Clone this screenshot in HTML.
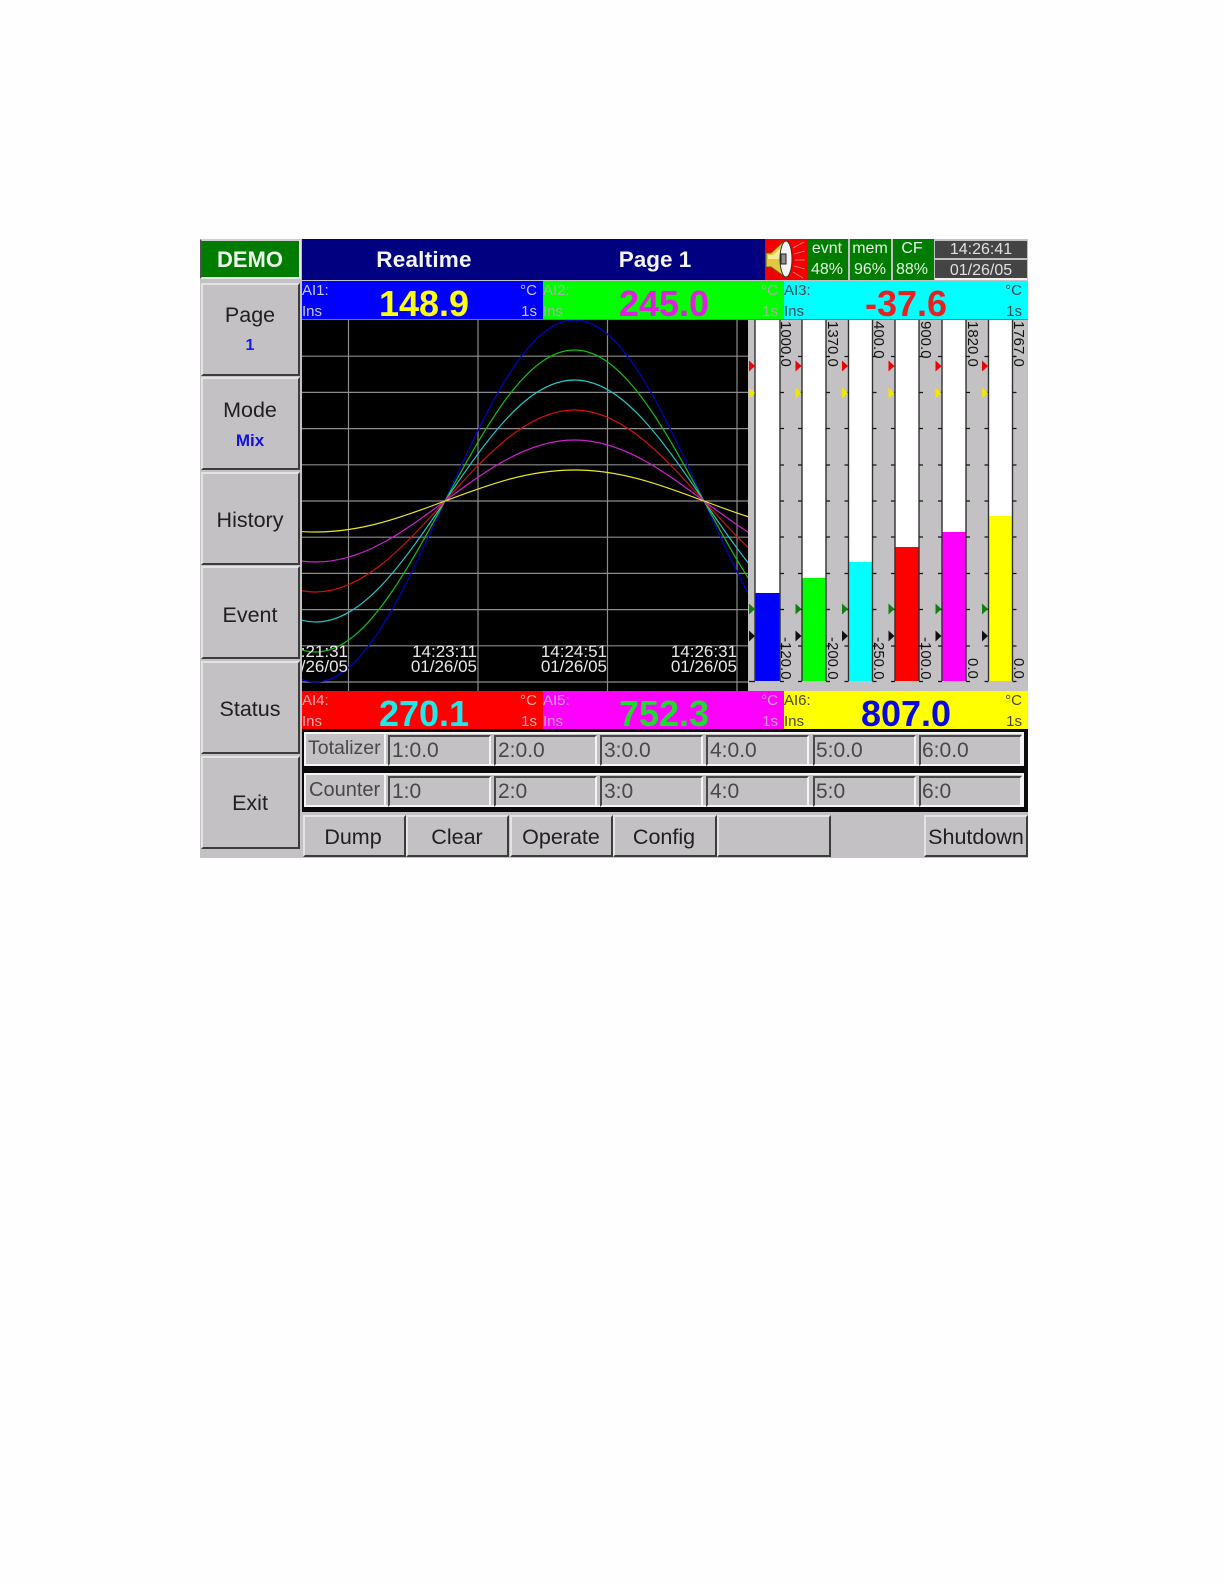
<!DOCTYPE html>
<html><head><meta charset="utf-8"><title>Realtime</title>
<style>
html,body{margin:0;padding:0;background:#fefefe}
body{width:1224px;height:1584px;position:relative;overflow:hidden;font-family:"Liberation Sans",sans-serif}
div{position:absolute;box-sizing:border-box}
.t{white-space:nowrap;text-align:center;line-height:30px;height:30px;margin-top:-15px;transform:translateX(-50%)}
.l{white-space:nowrap;line-height:20px;height:20px;margin-top:-10px;font-size:15px}
.r{white-space:nowrap;line-height:20px;height:20px;margin-top:-10px;font-size:15px;transform:translateX(-100%)}
.v{white-space:nowrap;font-weight:bold;font-size:36px;line-height:40px;height:40px;margin-top:-20px;transform:translateX(-50%)}
.b{background:#c3c1c3;border:2px solid;border-color:#e4e2e4 #3c3c3c #3c3c3c #e4e2e4}
.s{background:#c3c1c3;border:2px solid;border-color:#484848 #f4f4f4 #f4f4f4 #484848}
.f{font-size:21px;color:#484848;white-space:nowrap;line-height:30px;height:30px;margin-top:-15px}
.h{font-size:21.5px;color:#202020}
.w{color:#e6f0e6;font-size:16px;line-height:20px;height:20px;margin-top:-10px;white-space:nowrap;transform:translateX(-50%)}
.d{color:#e8e8e8;font-size:17px;line-height:18px;height:18px;margin-top:-9px;white-space:nowrap;transform:translateX(-100%)}
.y{writing-mode:vertical-rl;font-size:15px;line-height:16px;width:16px;color:#111;white-space:nowrap}
</style></head><body>
<div style="left:200px;top:239px;width:828px;height:619px;background:#c3c1c3"></div>

<!-- header -->
<div style="left:200px;top:239px;width:101px;height:40px;background:#007c00;border:2px solid;border-color:#d0d0d0 #e8e8e8 #e8e8e8 #505050"></div>
<div class="t" style="left:250px;top:260px;font-size:22px;font-weight:bold;color:#eef6ee">DEMO</div>
<div style="left:302px;top:239px;width:463px;height:41px;background:#000080"></div>
<div class="t" style="left:424px;top:260px;font-size:22.5px;font-weight:bold;color:#f4f4f4;letter-spacing:.2px">Realtime</div>
<div class="t" style="left:655px;top:260px;font-size:22.5px;font-weight:bold;color:#f4f4f4">Page 1</div>

<svg style="position:absolute;left:765px;top:239px" width="42" height="41" viewBox="0 0 42 41">
<rect width="42" height="41" fill="#f40000"/>
<path d="M1 14H6L19 2L20 38L6 28H1Z" fill="#e0c840" stroke="#6a5a10" stroke-width="1"/>
<path d="M3 16H8L17 8V20H3Z" fill="#f4ec90"/>
<ellipse cx="21" cy="20" rx="6" ry="18" fill="#f4f4f4" stroke="#303030" stroke-width="1"/>
<rect x="16" y="15" width="5" height="10" fill="#909090" stroke="#202020"/>
<path d="M28 9L39 3M29 15L40 12M30 21L40 21M29 27L40 30M28 33L38 39" stroke="#f07070" stroke-width="1" fill="none"/>
</svg>

<div style="left:807px;top:239px;width:41px;height:41px;background:#007c00"></div>
<div style="left:850px;top:239px;width:41px;height:41px;background:#007c00"></div>
<div style="left:893px;top:239px;width:41px;height:41px;background:#007c00"></div>
<div class="w" style="left:827px;top:249px">evnt</div>
<div class="w" style="left:827px;top:270px">48%</div>
<div class="w" style="left:870px;top:249px">mem</div>
<div class="w" style="left:870px;top:270px">96%</div>
<div class="w" style="left:912px;top:249px">CF</div>
<div class="w" style="left:912px;top:270px">88%</div>
<div style="left:935px;top:241px;width:92px;height:17px;background:#444"></div>
<div style="left:935px;top:260px;width:92px;height:18px;background:#444"></div>
<div style="left:935px;top:278px;width:92px;height:2px;background:#f0f0f0"></div>
<div class="w" style="left:981px;top:250px;color:#e0e0e0">14:26:41</div>
<div class="w" style="left:981px;top:271px;color:#e0e0e0">01/26/05</div>

<!-- top strips -->
<div style="left:302px;top:281px;width:241px;height:38px;background:#0000ff"></div>
<div style="left:543px;top:281px;width:241px;height:38px;background:#00ff00"></div>
<div style="left:784px;top:281px;width:244px;height:38px;background:#00ffff"></div>
<div class="l" style="left:302px;top:291px;color:#c8c8e0">AI1:</div>
<div class="l" style="left:302px;top:312px;color:#c8c8e0">Ins</div>
<div class="r" style="left:537px;top:291px;color:#c8c8e0">°C</div>
<div class="r" style="left:537px;top:312px;color:#c8c8e0">1s</div>
<div class="v" style="left:424px;top:304px;color:#ffff10">148.9</div>
<div class="l" style="left:543px;top:291px;color:#a8b0a8">AI2:</div>
<div class="l" style="left:543px;top:312px;color:#a8b0a8">Ins</div>
<div class="r" style="left:778px;top:291px;color:#a8b0a8">°C</div>
<div class="r" style="left:778px;top:312px;color:#a8b0a8">1s</div>
<div class="v" style="left:664px;top:304px;color:#e020e0">245.0</div>
<div class="l" style="left:784px;top:291px;color:#3c4a50">AI3:</div>
<div class="l" style="left:784px;top:312px;color:#3c4a50">Ins</div>
<div class="r" style="left:1022px;top:291px;color:#3c4a50">°C</div>
<div class="r" style="left:1022px;top:312px;color:#3c4a50">1s</div>
<div class="v" style="left:906px;top:304px;color:#e82020">-37.6</div>
<div style="left:302px;top:319px;width:726px;height:1px;background:#707878"></div>

<!-- chart -->
<svg style="position:absolute;left:302px;top:320px" width="446" height="371" viewBox="302 320 446 371">
<rect x="302" y="320" width="446" height="371" fill="#000"/>
<g stroke="#8c8c8c" stroke-width="1.2" fill="none">
<path d="M302 356.2H748M302 392.4H748M302 428.6H748M302 464.8H748M302 501H748M302 537.2H748M302 573.4H748M302 609.6H748M302 645.8H748M302 682H748"/>
<path d="M348.500 320V691M478 320V691M607.500 320V691M737 320V691"/>
</g>
<g fill="none" stroke-width="1.2">
<g transform="translate(574.5 501) scale(1 181)"><path vector-effect="non-scaling-stroke" stroke="#0000c8" d="M-388.5,0 C-346.3,.5123 -305.9,1 -259,1 C-212.1,1 -171.7,.5123 -129.5,0 C-87.3,-.5123 -46.9,-1 0,-1 C46.9,-1 87.3,-.5123 129.5,0 C171.7,.5123 212.1,1 259,1"/></g>
<g transform="translate(574.5 501) scale(1 151)"><path vector-effect="non-scaling-stroke" stroke="#10c010" d="M-388.5,0 C-346.3,.5123 -305.9,1 -259,1 C-212.1,1 -171.7,.5123 -129.5,0 C-87.3,-.5123 -46.9,-1 0,-1 C46.9,-1 87.3,-.5123 129.5,0 C171.7,.5123 212.1,1 259,1"/></g>
<g transform="translate(574.5 501) scale(1 121)"><path vector-effect="non-scaling-stroke" stroke="#20c8c8" d="M-388.5,0 C-346.3,.5123 -305.9,1 -259,1 C-212.1,1 -171.7,.5123 -129.5,0 C-87.3,-.5123 -46.9,-1 0,-1 C46.9,-1 87.3,-.5123 129.5,0 C171.7,.5123 212.1,1 259,1"/></g>
<g transform="translate(574.5 501) scale(1 91)"><path vector-effect="non-scaling-stroke" stroke="#d01010" d="M-388.5,0 C-346.3,.5123 -305.9,1 -259,1 C-212.1,1 -171.7,.5123 -129.5,0 C-87.3,-.5123 -46.9,-1 0,-1 C46.9,-1 87.3,-.5123 129.5,0 C171.7,.5123 212.1,1 259,1"/></g>
<g transform="translate(574.5 501) scale(1 61)"><path vector-effect="non-scaling-stroke" stroke="#d020d0" d="M-388.5,0 C-346.3,.5123 -305.9,1 -259,1 C-212.1,1 -171.7,.5123 -129.5,0 C-87.3,-.5123 -46.9,-1 0,-1 C46.9,-1 87.3,-.5123 129.5,0 C171.7,.5123 212.1,1 259,1"/></g>
<g transform="translate(574.5 501) scale(1 31)"><path vector-effect="non-scaling-stroke" stroke="#e8e820" d="M-388.5,0 C-346.3,.5123 -305.9,1 -259,1 C-212.1,1 -171.7,.5123 -129.5,0 C-87.3,-.5123 -46.9,-1 0,-1 C46.9,-1 87.3,-.5123 129.5,0 C171.7,.5123 212.1,1 259,1"/></g>
</g>
</svg>
<div style="left:302px;top:640px;width:46px;height:36px;overflow:hidden">
<div class="d" style="left:46px;top:12px;color:#e8e8e8">14:21:31</div>
<div class="d" style="left:46px;top:27px;color:#e8e8e8">01/26/05</div>
</div>
<div class="d" style="left:477px;top:652px">14:23:11</div>
<div class="d" style="left:477px;top:667px">01/26/05</div>
<div class="d" style="left:607px;top:652px">14:24:51</div>
<div class="d" style="left:607px;top:667px">01/26/05</div>
<div class="d" style="left:737px;top:652px">14:26:31</div>
<div class="d" style="left:737px;top:667px">01/26/05</div>

<!-- bars -->
<svg style="position:absolute;left:748px;top:320px" width="280" height="371" viewBox="748 320 280 371">
<rect x="748" y="320" width="280" height="371" fill="#c3c1c3"/>
<g id="bars">
<rect x="755" y="320" width="25" height="361" fill="#fff"/><rect x="755" y="593" width="25" height="88" fill="#0000ff"/>
<rect x="802" y="320" width="24" height="361" fill="#fff"/><rect x="802" y="578" width="24" height="103" fill="#00ff00"/>
<rect x="848.500" y="320" width="24" height="361" fill="#fff"/><rect x="848.500" y="562" width="24" height="119" fill="#00ffff"/>
<rect x="895" y="320" width="24" height="361" fill="#fff"/><rect x="895" y="547" width="24" height="134" fill="#ff0000"/>
<rect x="942" y="320" width="24" height="361" fill="#fff"/><rect x="942" y="532" width="24" height="149" fill="#ff00ff"/>
<rect x="988.500" y="320" width="24" height="361" fill="#fff"/><rect x="988.500" y="516" width="24" height="165" fill="#ffff00"/>
</g>
<path d="M755 320V681M780 320V681M802 320V681M826 320V681M848.500 320V681M872.500 320V681M895 320V681M919 320V681M942 320V681M966 320V681M988.500 320V681M1012.500 320V681" stroke="#303030" stroke-width="1.4" fill="none"/>
<path stroke="#151515" stroke-width="1.2" fill="none" d="M780 356.500h4M780 392.500h4M780 428.500h4M780 465h4M780 501h4M780 537h4M780 573.500h4M780 609.500h4M780 646h4M780 681.500h4
M798 356.500h4M798 392.500h4M798 428.500h4M798 465h4M798 501h4M798 537h4M798 573.500h4M798 609.500h4M798 646h4M798 681.500h4
M826 356.500h4M826 392.500h4M826 428.500h4M826 465h4M826 501h4M826 537h4M826 573.500h4M826 609.500h4M826 646h4M826 681.500h4
M844.500 356.500h4M844.500 392.500h4M844.500 428.500h4M844.500 465h4M844.500 501h4M844.500 537h4M844.500 573.500h4M844.500 609.500h4M844.500 646h4M844.500 681.500h4
M872.500 356.500h4M872.500 392.500h4M872.500 428.500h4M872.500 465h4M872.500 501h4M872.500 537h4M872.500 573.500h4M872.500 609.500h4M872.500 646h4M872.500 681.500h4
M891 356.500h4M891 392.500h4M891 428.500h4M891 465h4M891 501h4M891 537h4M891 573.500h4M891 609.500h4M891 646h4M891 681.500h4
M919 356.500h4M919 392.500h4M919 428.500h4M919 465h4M919 501h4M919 537h4M919 573.500h4M919 609.500h4M919 646h4M919 681.500h4
M938 356.500h4M938 392.500h4M938 428.500h4M938 465h4M938 501h4M938 537h4M938 573.500h4M938 609.500h4M938 646h4M938 681.500h4
M966 356.500h4M966 392.500h4M966 428.500h4M966 465h4M966 501h4M966 537h4M966 573.500h4M966 609.500h4M966 646h4M966 681.500h4
M984.500 356.500h4M984.500 392.500h4M984.500 428.500h4M984.500 465h4M984.500 501h4M984.500 537h4M984.500 573.500h4M984.500 609.500h4M984.500 646h4M984.500 681.500h4
M1012.500 356.500h4M1012.500 392.500h4M1012.500 428.500h4M1012.500 465h4M1012.500 501h4M1012.500 537h4M1012.500 573.500h4M1012.500 609.500h4M1012.500 646h4M1012.500 681.500h4
M749 681.500h6"/>
<g fill="#f00000"><path d="M749 360.500l6 5.500-6 5.500zM795.500 360.500l6 5.500-6 5.500zM842 360.500l6 5.500-6 5.500zM888.500 360.500l6 5.500-6 5.500zM935.500 360.500l6 5.500-6 5.500zM982 360.500l6 5.500-6 5.500z"/></g>
<g fill="#f0e800"><path d="M749 387.500l6 5.500-6 5.500zM795.500 387.500l6 5.500-6 5.500zM842 387.500l6 5.500-6 5.500zM888.500 387.500l6 5.500-6 5.500zM935.500 387.500l6 5.500-6 5.500zM982 387.500l6 5.500-6 5.500z"/></g>
<g fill="#108010"><path d="M749 603.500l6 5.500-6 5.500zM795.500 603.500l6 5.500-6 5.500zM842 603.500l6 5.500-6 5.500zM888.500 603.500l6 5.500-6 5.500zM935.500 603.500l6 5.500-6 5.500zM982 603.500l6 5.500-6 5.500z"/></g>
<g fill="#101010"><path d="M749 630.500l6 5.500-6 5.500zM795.500 630.500l6 5.500-6 5.500zM842 630.500l6 5.500-6 5.500zM888.500 630.500l6 5.500-6 5.500zM935.500 630.500l6 5.500-6 5.500zM982 630.500l6 5.500-6 5.500z"/></g>
</svg>
<div class="y" style="left:777px;top:321px">1000.0</div>
<div class="y" style="left:824px;top:321px">1370.0</div>
<div class="y" style="left:870px;top:321px">400.0</div>
<div class="y" style="left:917px;top:321px">900.0</div>
<div class="y" style="left:964px;top:321px">1820.0</div>
<div class="y" style="left:1010px;top:321px">1767.0</div>
<div class="y" style="left:777px;top:637px">-120.0</div>
<div class="y" style="left:824px;top:637px">-200.0</div>
<div class="y" style="left:870px;top:637px">-250.0</div>
<div class="y" style="left:917px;top:637px">-100.0</div>
<div class="y" style="left:964px;top:658px">0.0</div>
<div class="y" style="left:1010px;top:658px">0.0</div>

<!-- lower strips -->
<div style="left:302px;top:691px;width:241px;height:38px;background:#ff0000"></div>
<div style="left:543px;top:691px;width:241px;height:38px;background:#ff00ff"></div>
<div style="left:784px;top:691px;width:244px;height:38px;background:#ffff00"></div>
<div class="l" style="left:302px;top:701px;color:#e8b0b0">AI4:</div>
<div class="l" style="left:302px;top:722px;color:#e8b0b0">Ins</div>
<div class="r" style="left:537px;top:701px;color:#e8b0b0">°C</div>
<div class="r" style="left:537px;top:722px;color:#e8b0b0">1s</div>
<div class="v" style="left:424px;top:714px;color:#20e8e8">270.1</div>
<div class="l" style="left:543px;top:701px;color:#c8a0c8">AI5:</div>
<div class="l" style="left:543px;top:722px;color:#c8a0c8">Ins</div>
<div class="r" style="left:778px;top:701px;color:#c8a0c8">°C</div>
<div class="r" style="left:778px;top:722px;color:#c8a0c8">1s</div>
<div class="v" style="left:664px;top:714px;color:#20d830">752.3</div>
<div class="l" style="left:784px;top:701px;color:#484830">AI6:</div>
<div class="l" style="left:784px;top:722px;color:#484830">Ins</div>
<div class="r" style="left:1022px;top:701px;color:#484830">°C</div>
<div class="r" style="left:1022px;top:722px;color:#484830">1s</div>
<div class="v" style="left:906px;top:714px;color:#0808e0">807.0</div>

<!-- totalizer / counter -->
<div style="left:302px;top:729px;width:726px;height:83px;background:#0a0a0a"></div>
<div style="left:304px;top:732px;width:720px;height:34px;background:#c3c1c3;border:2px solid #f4f4f4"></div>
<div style="left:304px;top:773px;width:720px;height:34px;background:#c3c1c3;border:2px solid #f4f4f4"></div>
<div style="left:306px;top:734px;width:80px;height:30px;background:#c3c1c3;border-right:2px solid #f4f4f4"></div>
<div style="left:306px;top:775px;width:80px;height:30px;background:#c3c1c3;border-right:2px solid #f4f4f4"></div>
<div class="f" style="left:308px;top:748px;font-size:19.5px">Totalizer</div>
<div class="f" style="left:309px;top:790px;font-size:20px">Counter</div>

<div class="s" style="left:388px;top:735px;width:103px;height:31px"></div>
<div class="s" style="left:494px;top:735px;width:103px;height:31px"></div>
<div class="s" style="left:600px;top:735px;width:103px;height:31px"></div>
<div class="s" style="left:706px;top:735px;width:103px;height:31px"></div>
<div class="s" style="left:813px;top:735px;width:103px;height:31px"></div>
<div class="s" style="left:919px;top:735px;width:103px;height:31px"></div>
<div class="s" style="left:388px;top:776px;width:103px;height:31px"></div>
<div class="s" style="left:494px;top:776px;width:103px;height:31px"></div>
<div class="s" style="left:600px;top:776px;width:103px;height:31px"></div>
<div class="s" style="left:706px;top:776px;width:103px;height:31px"></div>
<div class="s" style="left:813px;top:776px;width:103px;height:31px"></div>
<div class="s" style="left:919px;top:776px;width:103px;height:31px"></div>

<div class="f" style="left:392px;top:751px">1:0.0</div>
<div class="f" style="left:498px;top:751px">2:0.0</div>
<div class="f" style="left:604px;top:751px">3:0.0</div>
<div class="f" style="left:710px;top:751px">4:0.0</div>
<div class="f" style="left:816px;top:751px">5:0.0</div>
<div class="f" style="left:922px;top:751px">6:0.0</div>
<div class="f" style="left:392px;top:792px">1:0</div>
<div class="f" style="left:498px;top:792px">2:0</div>
<div class="f" style="left:604px;top:792px">3:0</div>
<div class="f" style="left:710px;top:792px">4:0</div>
<div class="f" style="left:816px;top:792px">5:0</div>
<div class="f" style="left:922px;top:792px">6:0</div>

<!-- bottom buttons -->
<div class="b" style="left:303px;top:815px;width:103px;height:42px"></div>
<div class="b" style="left:406px;top:815px;width:103px;height:42px"></div>
<div class="b" style="left:510px;top:815px;width:103px;height:42px"></div>
<div class="b" style="left:613px;top:815px;width:104px;height:42px"></div>
<div class="b" style="left:717px;top:815px;width:114px;height:42px"></div>
<div class="b" style="left:924px;top:815px;width:104px;height:42px"></div>
<div class="t h" style="left:353px;top:837px">Dump</div>
<div class="t h" style="left:457px;top:837px">Clear</div>
<div class="t h" style="left:561px;top:837px">Operate</div>
<div class="t h" style="left:664px;top:837px">Config</div>
<div class="t h" style="left:976px;top:837px">Shutdown</div>

<!-- left buttons -->
<div class="b" style="left:201px;top:283px;width:99px;height:93px"></div>
<div class="b" style="left:201px;top:377px;width:99px;height:93px"></div>
<div class="b" style="left:201px;top:472px;width:99px;height:93px"></div>
<div class="b" style="left:201px;top:566px;width:99px;height:93px"></div>
<div class="b" style="left:201px;top:661px;width:99px;height:93px"></div>
<div class="b" style="left:201px;top:756px;width:99px;height:93px"></div>
<div class="t h" style="left:250px;top:315px">Page</div>
<div class="t" style="left:250px;top:346px;font-size:16px;font-weight:bold;color:#1818e8">1</div>
<div class="t h" style="left:250px;top:410px">Mode</div>
<div class="t" style="left:250px;top:441px;font-size:17px;font-weight:bold;color:#1010e8">Mix</div>
<div class="t h" style="left:250px;top:520px">History</div>
<div class="t h" style="left:250px;top:615px">Event</div>
<div class="t h" style="left:250px;top:709px">Status</div>
<div class="t h" style="left:250px;top:803px">Exit</div>
</body></html>
